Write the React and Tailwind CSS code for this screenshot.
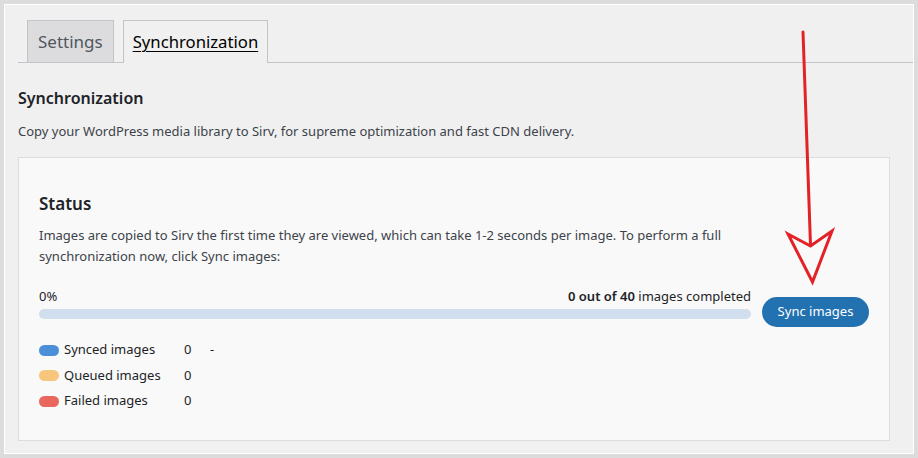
import React from "react";

export default function App() {
  const font = { fontFamily: '"Noto Sans", "Open Sans", sans-serif' };
  return (
    <div className="w-[918px] h-[458px] bg-[#dcdcdc] p-[4px] relative" style={font}>
      <div className="w-full h-[450px] border border-white bg-[#f0f0f0] pt-[15px] pr-0 pl-[13px]">
        {/* Tabs */}
        <div className="flex items-end gap-[9px] border-b border-[#c3c4c7] h-[43px] pl-[9px]">
          <div className="h-[42px] px-[10px] flex items-center bg-[#dcdcde] border border-b-0 border-[#c3c4c7] text-[17px] text-[#50575e]">
            Settings
          </div>
          <div className="h-[43px] -mb-px px-[9px] flex items-center bg-[#f0f0f0] border border-b-0 border-[#c3c4c7] text-[16.7px] text-black underline underline-offset-[3px]">
            Synchronization
          </div>
        </div>
        <h2 className="mt-[24px] text-[16px] font-semibold text-[#1d2327] leading-[22px]">Synchronization</h2>
        <p className="mt-[12px] text-[13px] text-[#3c434a] leading-[20px]">
          Copy your WordPress media library to Sirv, for supreme optimization and fast CDN delivery.
        </p>
        <div className="mt-[16px] w-[872px] h-[284px] bg-[#f9f9f9] border border-[#dcdcde] px-[20px] pt-[34px]">
          <h3 className="text-[17px] font-semibold text-[#1d2327] leading-[24px]">Status</h3>
          <p className="mt-[9px] text-[13px] text-[#3c434a] leading-[21px] w-[720px]">
            Images are copied to Sirv the first time they are viewed, which can take 1-2 seconds per image. To perform a full synchronization now, click Sync images:
          </p>
          <div className="mt-[20px] flex items-end gap-[11px]">
            <div className="w-[712px]">
              <div className="flex justify-between text-[13px] text-[#1d2327] leading-[18px]">
                <span>0%</span>
                <span><span className="font-semibold">0 out of 40</span> images completed</span>
              </div>
              <div className="mt-[4px] h-[10px] rounded-full bg-[#d0deed]"></div>
            </div>
            <button className="h-[30px] w-[107px] -mb-[8px] rounded-full bg-[#2271b1] text-white text-[13px]">
              Sync images
            </button>
          </div>
          <div className="mt-[21px] flex flex-col gap-[5.5px] text-[13px] text-[#1d2327]">
            {[
              ["Synced images", "bg-[#4a8fd8]", true],
              ["Queued images", "bg-[#f7c57c]", false],
              ["Failed images", "bg-[#e9675d]", false],
            ].map(([label, c, dash]) => (
              <div key={label} className="flex items-center h-[20px]">
                <span className={`w-[20px] h-[11px] rounded-full ${c}`}></span>
                <span className="ml-[5px] w-[120px]">{label}</span>
                <span className="w-[26px]">0</span>
                {dash && <span>-</span>}
              </div>
            ))}
          </div>
        </div>
      </div>
      <svg className="absolute left-0 top-0 pointer-events-none" width="918" height="458">
        <path d="M803 32 L810.5 245" stroke="#e32227" strokeWidth="3" fill="none" strokeLinecap="round" />
        <path d="M788 234 L810.5 246 L832 231 L812.5 282 Z" stroke="#e32227" strokeWidth="3" fill="none" strokeLinejoin="miter" />
      </svg>
    </div>
  );
}
